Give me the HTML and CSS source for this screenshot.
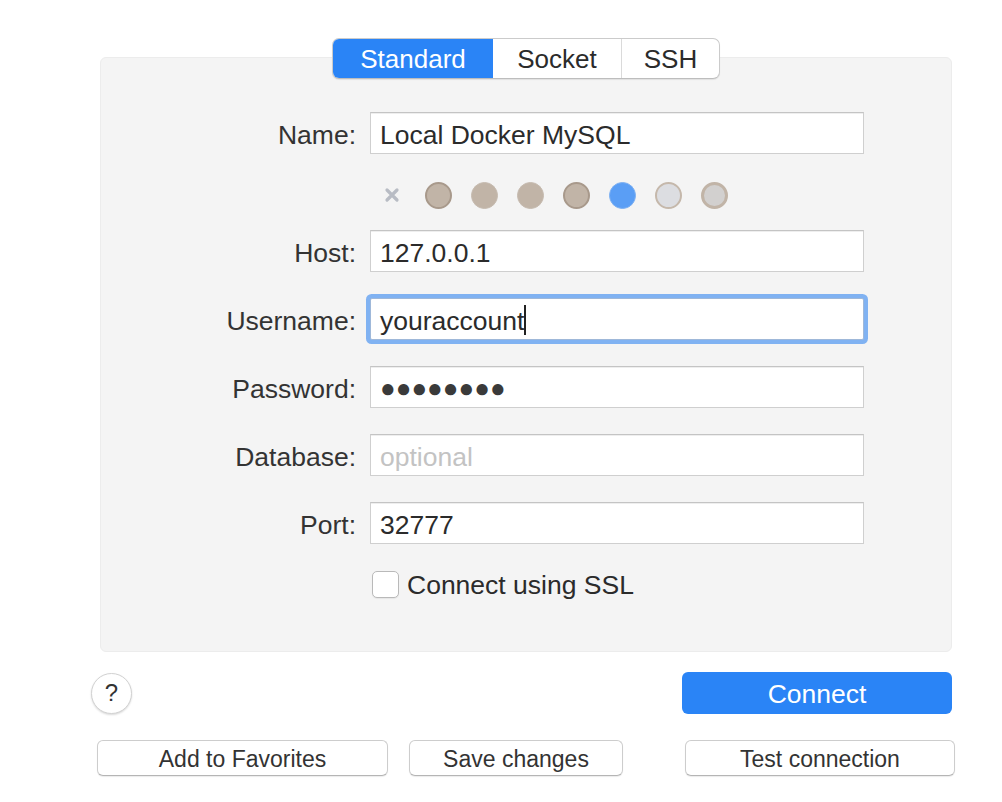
FILE: index.html
```html
<!DOCTYPE html>
<html lang="en">
<head>
<meta charset="utf-8">
<title>Connection</title>
<link rel="stylesheet" href="styles.css">
</head>
<body>
<div class="dialog">
  <div class="panel">
    <div class="tabs">
      <div class="tab tab-std active">Standard</div>
      <div class="tab tab-socket">Socket</div>
      <div class="tab tab-ssh">SSH</div>
    </div>
    <div class="form">
      <label class="label">Name:</label>
      <div class="field">Local Docker MySQL</div>

      <div class="spacer"></div>
      <div class="colors">
        <span class="xmark">
          <svg width="18" height="18" viewBox="0 0 18 18"><path d="M4 4 L14 14 M14 4 L4 14" stroke="#b8bcc4" stroke-width="3.2" stroke-linecap="round"/></svg>
        </span>
        <span class="dot dot-ring"></span>
        <span class="dot"></span>
        <span class="dot"></span>
        <span class="dot dot-ring"></span>
        <span class="dot dot-blue"></span>
        <span class="dot dot-light"></span>
        <span class="dot dot-gray"></span>
      </div>

      <label class="label">Host:</label>
      <div class="field">127.0.0.1</div>

      <label class="label">Username:</label>
      <div class="field focused">youraccount<span class="caret"></span></div>

      <label class="label">Password:</label>
      <div class="field pw">●●●●●●●●</div>

      <label class="label">Database:</label>
      <div class="field placeholder">optional</div>

      <label class="label">Port:</label>
      <div class="field">32777</div>

      <div class="spacer"></div>
      <div class="check-row"><span class="checkbox"></span><span class="check-text">Connect using SSL</span></div>
    </div>
  </div>

  <div class="action-row">
    <div class="help">?</div>
    <div class="btn-primary">Connect</div>
  </div>

  <div class="bottom-row">
    <div class="btn btn-fav">Add to Favorites</div>
    <div class="btn btn-save">Save changes</div>
    <div class="btn btn-test">Test connection</div>
  </div>
</div>
</body>
</html>
```
FILE: styles.css
```css
* { box-sizing: border-box; }
html, body { margin: 0; padding: 0; background: #ffffff; }
body {
  font-family: "Liberation Sans", Arial, sans-serif;
  color: #2b2b2b;
  width: 1002px;
  height: 802px;
  overflow: hidden;
}
.dialog {
  padding: 57px 0 0 97px;
  width: 1002px;
}
.panel {
  margin-left: 3px;
  width: 852px;
  height: 595px;
  background: #f4f4f4;
  border: 1px solid #ececec;
  border-radius: 6px;
  display: flex;
  flex-direction: column;
}
.tabs {
  margin: -20px 0 0 231px;
  display: flex;
  height: 41px;
  width: 388px;
  background: #ffffff;
  border: 1px solid #cbcbcb;
  border-bottom-color: #bdbdbd;
  border-radius: 7px;
  box-shadow: 0 1px 1px rgba(0,0,0,0.08);
  overflow: hidden;
}
.tab {
  display: flex;
  align-items: center;
  justify-content: center;
  font-size: 26px;
  padding-top: 2px;
  color: #2b2b2b;
}
.tab-std { width: 160px; }
.tab-socket { width: 129px; border-right: 1px solid #dadada; }
.tab-ssh { flex: 1; }
.tab.active {
  background: #2a84f6;
  color: #ffffff;
}
.form {
  margin-top: 33px;
  display: grid;
  grid-template-columns: 255px 494px;
  column-gap: 14px;
  row-gap: 26px;
  align-items: center;
}
.label {
  justify-self: end;
  font-size: 26.5px;
  color: #333333;
  padding-top: 5px;
}
.field {
  height: 42px;
  background: #ffffff;
  border: 1px solid #cfcfcf;
  border-top-color: #c4c4c4;
  box-shadow: inset 0 1px 0 #eeeeee;
  display: flex;
  align-items: center;
  padding: 5px 9px 0 9px;
  font-size: 26.5px;
  color: #2b2b2b;
}
.field.focused {
  border-color: #9fb8d9;
  box-shadow: 0 0 0 4px #80b2f2;
  border-radius: 2px;
}
.caret {
  display: inline-block;
  width: 2px;
  height: 30px;
  background: #222222;
  margin-top: -4px;
}
.field.pw {
  font-size: 26px;
  color: #3a3a3a;
  padding-top: 2px;
}
.field.placeholder { color: #c3c3c3; }
.spacer { height: 1px; }
.colors {
  display: flex;
  align-items: center;
  gap: 19px;
  padding-left: 13px;
  margin: 2px 0 -4px 0;
  height: 26px;
}
.xmark {
  width: 18px;
  height: 18px;
  display: flex;
  margin-right: 5px;
}
.dot {
  width: 27px;
  height: 27px;
  border-radius: 50%;
  background: #c1b4a7;
  border: 1px solid #c6bbb0;
  flex: none;
}
.dot-ring { border: 2px solid #a8998b; }
.dot-blue { background: #5a9ef5; border-color: #7db0f2; }
.dot-light { background: #dcdde1; border: 2px solid #c5b8ab; }
.dot-gray { background: #d2d0cf; border: 3px solid #c1b4a7; }
.check-row {
  display: flex;
  align-items: center;
  gap: 8px;
  font-size: 26.5px;
  color: #2b2b2b;
  padding-left: 2px;
  margin-top: -2px;
}
.check-text { padding-top: 2px; }
.checkbox {
  width: 27px;
  height: 27px;
  background: #ffffff;
  border: 1px solid #b9b9b9;
  border-radius: 5px;
  box-shadow: 0 1px 1px rgba(0,0,0,0.06);
}
.action-row {
  margin-top: 20px;
  display: flex;
  align-items: center;
  justify-content: space-between;
  width: 855px;
}
.help {
  width: 41px;
  height: 41px;
  border-radius: 50%;
  background: #ffffff;
  border: 1px solid #d2d2d2;
  box-shadow: 0 1px 2px rgba(0,0,0,0.15);
  display: flex;
  align-items: center;
  justify-content: center;
  font-size: 24px;
  color: #333333;
  margin-left: -6px;
}
.btn-primary {
  width: 270px;
  height: 42px;
  border-radius: 6px;
  background: #2a84f6;
  color: #ffffff;
  display: flex;
  align-items: center;
  justify-content: center;
  font-size: 26.5px;
  padding-top: 2px;
}
.bottom-row {
  margin-top: 26px;
  display: flex;
  width: 858px;
}
.btn {
  height: 36px;
  background: #ffffff;
  border: 1px solid #cdcdcd;
  border-bottom-color: #b5b5b5;
  border-radius: 6px;
  box-shadow: 0 1px 1px rgba(0,0,0,0.08);
  display: flex;
  align-items: center;
  justify-content: center;
  font-size: 23px;
  padding-top: 2px;
  color: #333333;
}
.btn-fav { width: 291px; }
.btn-save { width: 214px; margin-left: 21px; }
.btn-test { width: 270px; margin-left: auto; }
```
